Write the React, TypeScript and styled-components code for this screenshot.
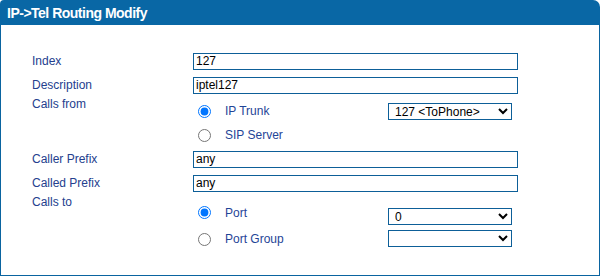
import React from 'react'
import styled, { createGlobalStyle } from 'styled-components'

const GlobalStyle = createGlobalStyle`
  html, body {
    margin: 0;
    padding: 0;
    background: #ffffff;
  }
  body {
    font-family: "Liberation Sans", Arial, sans-serif;
  }
`

const Panel = styled.section`
  width: 600px;
  height: 276px;
  display: flex;
  flex-direction: column;
`

const Header = styled.h1`
  margin: 0;
  height: 25px;
  flex: none;
  display: flex;
  align-items: center;
  padding-left: 7px;
  background: #0967a5;
  border-radius: 4px 7px 0 0;
  color: #ffffff;
  font-size: 14px;
  font-weight: bold;
  letter-spacing: -0.5px;
`

const Body = styled.div`
  flex: 1;
  border: 1px solid #0a64a0;
  border-top: none;
  padding: 24px 0 0 31px;
`

const Form = styled.div`
  display: grid;
  grid-template-columns: 161px 325px;
`

const Label = styled.div<{ $top?: boolean }>`
  height: ${(p) => (p.$top ? 'auto' : '24px')};
  display: flex;
  align-items: ${(p) => (p.$top ? 'flex-start' : 'center')};
  line-height: 14px;
  font-size: 12px;
  color: #24408e;
`

const Cell = styled.div`
  height: 24px;
  display: flex;
  align-items: center;
`

const TextInput = styled.input`
  box-sizing: border-box;
  width: 325px;
  height: 17px;
  margin: 0;
  padding: 0 2px;
  border: 1px solid #0d5f98;
  font-family: "Liberation Sans", Arial, sans-serif;
  font-size: 12px;
  color: #000000;
  outline: none;
`

const Options = styled.div<{ $offset: number }>`
  display: flex;
  flex-direction: column;
  gap: 3px;
  padding-top: ${(p) => p.$offset}px;
`

const OptionRow = styled.div<{ $tight?: boolean }>`
  height: 24px;
  display: grid;
  grid-template-columns: 195px 124px;
  align-items: center;
  margin-bottom: ${(p) => (p.$tight ? '-3px' : '0')};
`

const Choice = styled.label`
  display: flex;
  align-items: center;
  gap: 14px;
  font-size: 12px;
  color: #1f4597;
`

const Radio = styled.input`
  width: 13px;
  height: 13px;
  margin: 0 0 0 5px;
`

const Select = styled.select<{ $drop?: number }>`
  box-sizing: border-box;
  width: 124px;
  height: 17px;
  margin: ${(p) => p.$drop ?? 0}px 0 0 0;
  padding: 0 0 0 2px;
  border: 1px solid #0d5f98;
  border-radius: 0;
  background: #ffffff;
  font-family: "Liberation Sans", Arial, sans-serif;
  font-size: 12px;
  color: #000000;
  outline: none;
`

export default function App() {
  return (
    <>
      <GlobalStyle />
      <Panel>
        <Header>IP-&gt;Tel Routing Modify</Header>
        <Body>
          <Form>
            <Label>Index</Label>
            <Cell>
              <TextInput defaultValue="127" />
            </Cell>
            <Label>Description</Label>
            <Cell>
              <TextInput defaultValue="iptel127" />
            </Cell>
            <Label $top>Calls from</Label>
            <Options $offset={2}>
              <OptionRow $tight>
                <Choice>
                  <Radio type="radio" name="from" defaultChecked />
                  IP Trunk
                </Choice>
                <Select defaultValue="127">
                  <option value="127">127 &lt;ToPhone&gt;</option>
                </Select>
              </OptionRow>
              <OptionRow>
                <Choice>
                  <Radio type="radio" name="from" />
                  SIP Server
                </Choice>
              </OptionRow>
            </Options>
            <Label>Caller Prefix</Label>
            <Cell>
              <TextInput defaultValue="any" />
            </Cell>
            <Label>Called Prefix</Label>
            <Cell>
              <TextInput defaultValue="any" />
            </Cell>
            <Label $top>Calls to</Label>
            <Options $offset={5}>
              <OptionRow>
                <Choice>
                  <Radio type="radio" name="to" defaultChecked />
                  Port
                </Choice>
                <Select defaultValue="0" $drop={8}>
                  <option value="0">0</option>
                </Select>
              </OptionRow>
              <OptionRow>
                <Choice>
                  <Radio type="radio" name="to" />
                  Port Group
                </Choice>
                <Select defaultValue="" $drop={-2}>
                  <option value=""></option>
                </Select>
              </OptionRow>
            </Options>
          </Form>
        </Body>
      </Panel>
    </>
  )
}
